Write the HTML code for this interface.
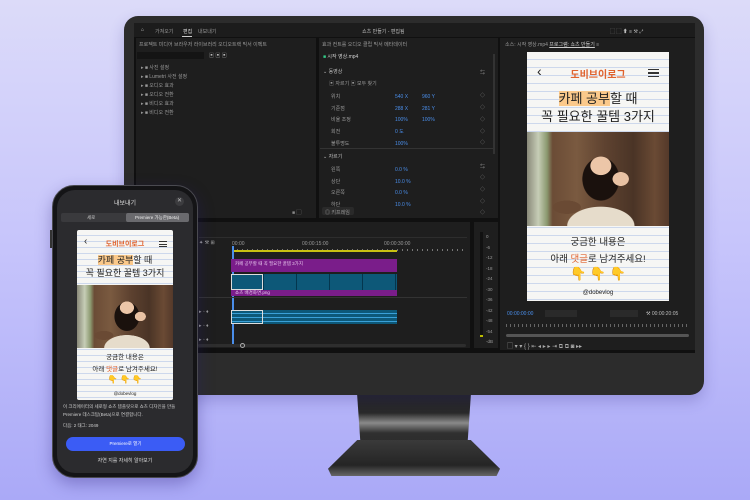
<!DOCTYPE html>
<html><head><meta charset="utf-8"><style>
*{margin:0;padding:0;box-sizing:border-box}
body{width:750px;height:500px;overflow:hidden;position:relative;background:linear-gradient(180deg,#dcdbf9 0%,#c6c4fb 50%,#aaa9f7 100%);font-family:"Liberation Sans","Noto Sans CJK KR",sans-serif;}
.abs{position:absolute}
.t{position:absolute;white-space:nowrap;color:#9a9a9a;font-size:5px}
.paper{background-color:#f6f6f4;background-image:repeating-linear-gradient(180deg,transparent 0,transparent 7px,#cdd8ec 7px,#cdd8ec 8px);}
.photo{background:
 radial-gradient(ellipse 9% 12% at 52% 36%,#ecc6a8 0 80%,transparent 84%),
 radial-gradient(ellipse 7% 9% at 66% 50%,#e8c2a4 0 80%,transparent 84%),
 radial-gradient(ellipse 17% 30% at 52% 50%,#1a110d 0 75%,transparent 78%),
 radial-gradient(ellipse 30% 26% at 52% 100%,#e6dccb 0 78%,transparent 80%),
 radial-gradient(ellipse 14% 10% at 28% 80%,#6a4a34 0 70%,transparent 72%),
 linear-gradient(90deg,#8a8a7a 0,#c6cdb6 8%,#8c9a70 14%,#6b4c36 18%,#7a5a40 35%,#5e4230 55%,#4a3426 75%,#6a4a34 90%,#54392a 100%);}
.scr{font-family:"Liberation Sans","Noto Sans CJK KR",sans-serif;font-weight:bold;color:#222}
</style></head><body>

<!-- monitor -->
<div class="abs" style="left:357px;top:393px;width:114px;height:50px;background:linear-gradient(180deg,#1e1e1e 0,#2a2a2a 40%,#8a8a8a 60%,#303030 80%,#2c2c2c 100%);clip-path:polygon(0 0,100% 0,97% 100%,3% 100%)"></div>
<div class="abs" style="left:328px;top:440px;width:172px;height:36px;background:linear-gradient(180deg,#3a3a3a,#252525 70%,#666 100%);clip-path:polygon(17% 0,83% 0,100% 80%,98% 100%,2% 100%,0 80%);box-shadow:0 4px 6px rgba(0,0,0,.2)"></div>
<div class="abs" style="left:124px;top:16px;width:580px;height:379px;background:#2c2c2c;border-radius:14px;box-shadow:0 6px 14px rgba(60,50,140,.25)"></div>
<div class="abs" style="left:134px;top:23px;width:561px;height:330px;background:#101010"></div>

<!-- top bar -->
<div class="abs" style="left:134px;top:23px;width:561px;height:14px;background:#1c1c1c"></div>
<div class="t" style="left:141px;top:27px;color:#ccc">⌂</div>
<div class="t" style="left:155px;top:28px">가져오기</div>
<div class="t" style="left:183px;top:28px;color:#ddd">편집</div>
<div class="t" style="left:198px;top:28px">내보내기</div>
<div class="abs" style="left:182px;top:36px;width:10px;height:1px;background:#ccc"></div>
<div class="t" style="left:362px;top:28px;color:#bbb">쇼츠 만들기 - 편집됨</div>
<div class="t" style="left:610px;top:28px;color:#bbb">⬚ ⬚ ⬆ ≡ ⚒ ⤢</div>

<!-- project panel -->
<div class="abs" style="left:136px;top:38px;width:180px;height:180px;background:#1e1e1e"></div>
<div class="t" style="left:139px;top:41px">프로젝트  미디어 브라우저  라이브러리  오디오트랙 믹서  이펙트</div>
<div class="abs" style="left:137px;top:52px;width:67px;height:7px;background:#141414"></div>
<div class="t" style="left:209px;top:52px;color:#bbb">▣ ▣ ▣</div>
<div class="t" style="left:141px;top:64px;line-height:9px;color:#999">▸ ■ 사진 설정<br>▸ ■ Lumetri 사전 설정<br>▸ ■ 오디오 효과<br>▸ ■ 오디오 전환<br>▸ ■ 비디오 효과<br>▸ ■ 비디오 전환</div>
<div class="t" style="left:292px;top:209px;color:#888">■ ▢</div>

<!-- effects panel -->
<div class="abs" style="left:319px;top:38px;width:179px;height:180px;background:#1e1e1e"></div>
<div class="t" style="left:322px;top:41px">효과 컨트롤  오디오 클립 믹서  메타데이터</div>
<div class="t" style="left:323px;top:53px;color:#ccc"><span style="color:#3c8">■</span> 시작 영상.mp4</div>
<div class="t" style="left:323px;top:68px;color:#bbb">⌄ 동영상</div>
<div class="t" style="left:329px;top:80px">▣ 자르기  ▣ 모두 찾기</div>
<div class="t" style="left:331px;top:92px;line-height:11.7px">위치<br>기준점<br>비율 조정<br>회전<br>불투명도</div>
<div class="t" style="left:395px;top:92px;line-height:11.7px;color:#4a8eea">540 X<br>288 X<br>100%<br>0 도<br>100%</div>
<div class="t" style="left:422px;top:92px;line-height:11.7px;color:#4a8eea">960 Y<br>281 Y<br>100%</div>
<div class="abs" style="left:320px;top:148px;width:175px;height:1px;background:#333"></div>
<div class="t" style="left:323px;top:153px;color:#bbb">⌄ 자르기</div>
<div class="t" style="left:331px;top:165px;line-height:11.7px">왼쪽<br>상단<br>오른쪽<br>하단</div>
<div class="t" style="left:395px;top:165px;line-height:11.7px;color:#4a8eea">0.0 %<br>10.0 %<br>0.0 %<br>10.0 %</div>
<div class="t" style="left:480px;top:68px;line-height:11.7px;color:#888">⇆<br><br>◇<br>◇<br>◇<br>◇<br>◇<br><br>⇆<br>◇<br>◇<br>◇<br>◇</div>
<div class="abs" style="left:493px;top:54px;width:2px;height:100px;background:#333"></div>
<div class="abs" style="left:322px;top:207px;width:32px;height:8px;background:#2a2a2a;border-radius:2px"></div>
<div class="t" style="left:325px;top:209px">◎ 키프레임</div>

<!-- program monitor -->
<div class="abs" style="left:500px;top:38px;width:195px;height:312px;background:#1e1e1e"></div>
<div class="t" style="left:505px;top:41px">소스: 시작 영상.mp4    <span style="color:#ccc;text-decoration:underline">프로그램: 쇼츠 만들기</span>  ≡</div>

<!-- preview -->
<div class="abs paper scr" style="left:527px;top:52px;width:142px;height:249px;overflow:hidden">
  <div class="abs" style="left:10px;top:11px;font-size:14px;font-weight:normal">‹</div>
  <div class="abs" style="left:0;width:142px;top:14px;text-align:center;color:#e0622e;font-size:10px">도비브이로그</div>
  <div class="abs" style="left:121px;top:17px;width:11px;height:8px;border-top:1.5px solid #333;border-bottom:1.5px solid #333"><div style="margin-top:2px;height:1.5px;background:#333"></div></div>
  <div class="abs" style="left:0;width:142px;top:38px;text-align:center;font-size:13px;line-height:18px;font-weight:normal;color:#222"><span style="background:#fbc98b">카페 공부</span>할 때<br>꼭 필요한 꿀템 3가지</div>
  <div class="abs photo" style="left:0;top:80px;width:142px;height:94px"></div>
  <div class="abs" style="left:0;width:142px;top:182px;text-align:center;font-size:9.5px;line-height:17px;font-weight:normal">궁금한 내용은<br>아래 <span style="color:#e0622e">댓글</span>로 남겨주세요!</div>
  <div class="abs" style="left:0;width:142px;top:214px;text-align:center;font-size:13px;color:#f4a526">👇 👇 👇</div>
  <div class="abs" style="left:0;width:142px;top:238px;text-align:center;font-size:6px;font-weight:normal">@dobevlog</div>
</div>
<div class="t" style="left:507px;top:311px;color:#4a8eea">00:00:00:00</div>
<div class="abs" style="left:545px;top:310px;width:32px;height:7px;background:#2a2a2a"></div>
<div class="abs" style="left:610px;top:310px;width:28px;height:7px;background:#2a2a2a"></div>
<div class="t" style="left:646px;top:311px;color:#bbb">⚒ 00:00:20:05</div>
<div class="abs" style="left:506px;top:324px;width:183px;height:3px;background:repeating-linear-gradient(90deg,#666 0 1px,transparent 1px 4px)"></div>
<div class="abs" style="left:506px;top:334px;width:183px;height:3px;background:#555;border-radius:2px"></div>
<div class="t" style="left:507px;top:341px;color:#aaa;font-size:6px">▢ ▾ ▾ { } ⇤ ◂ ▸ ▸ ⇥ ⧉ ⧉ ◙ ▸▸</div>

<!-- timeline -->
<div class="abs" style="left:196px;top:222px;width:274px;height:126px;background:#1e1e1e"></div>
<div class="abs" style="left:199px;top:237px;width:268px;height:1px;background:#2d2d2d"></div>
<div class="t" style="left:199px;top:240px;color:#aaa">✦ ⚒ ⊞</div>
<div class="t" style="left:232px;top:241px">00:00</div>
<div class="t" style="left:302px;top:241px">00:00:15:00</div>
<div class="t" style="left:384px;top:241px">00:00:30:00</div>
<div class="abs" style="left:232px;top:249px;width:234px;height:2px;background:repeating-linear-gradient(90deg,#777 0 1px,transparent 1px 5px)"></div>
<div class="abs" style="left:232px;top:250px;width:165px;height:2px;background:#c8c012"></div>
<div class="abs" style="left:232px;top:246px;width:2px;height:100px;background:#4a8eea"></div>
<div class="abs" style="left:231px;top:259px;width:166px;height:13px;background:#7a1d8a"></div>
<div class="t" style="left:235px;top:261px;color:#e8c8ee;font-size:4.5px">카페 공부할 때 꼭 필요한 꿀템 3가지</div>
<div class="abs" style="left:231px;top:274px;width:166px;height:16px;background:repeating-linear-gradient(90deg,#0d5878 0 32px,#04364e 32px 33px)"></div>
<div class="abs" style="left:231px;top:274px;width:32px;height:16px;border:1px solid #ddd"></div>
<div class="abs" style="left:231px;top:290px;width:166px;height:6px;background:#7a1d8a"></div>
<div class="t" style="left:235px;top:290px;color:#e8c8ee;font-size:4.5px">쇼츠 배경화면.png</div>
<div class="abs" style="left:199px;top:297px;width:268px;height:1px;background:#333"></div>
<div class="abs" style="left:231px;top:310px;width:166px;height:14px;background:repeating-linear-gradient(180deg,#0d5878 0 3px,#3aa0d8 3px 4px)"></div>
<div class="abs" style="left:231px;top:310px;width:32px;height:14px;border:1px solid #ddd"></div>
<div class="t" style="left:199px;top:305px;line-height:14px">▸ ◦ ♦<br>▸ ◦ ♦<br>▸ ◦ ♦</div>
<div class="abs" style="left:198px;top:344px;width:268px;height:3px;background:#2e2e2e;border-radius:2px"></div>
<div class="abs" style="left:240px;top:343px;width:5px;height:5px;border:1px solid #aaa;border-radius:50%"></div>

<!-- audio meter -->
<div class="abs" style="left:474px;top:222px;width:24px;height:126px;background:#1e1e1e"></div>
<div class="abs" style="left:480px;top:232px;width:3px;height:105px;background:#111;border-bottom:2px solid #bb0"></div>
<div class="t" style="left:486px;top:232px;line-height:10.5px;font-size:4.5px">0<br>-6<br>-12<br>-18<br>-24<br>-30<br>-36<br>-42<br>-48<br>-54<br>-dB</div>

<!-- phone -->
<div class="abs" style="left:52px;top:185px;width:146px;height:293px;background:#141416;border-radius:22px;box-shadow:0 6px 16px rgba(40,30,120,.35);border:1px solid #4a4a50"></div>
<div class="abs" style="left:50px;top:230px;width:2px;height:18px;background:#333"></div>
<div class="abs" style="left:57px;top:190px;width:136px;height:283px;background:#2b2b2e;border-radius:18px"></div>
<div class="t" style="left:57px;width:136px;text-align:center;top:198px;color:#ddd;font-size:6px">내보내기</div>
<div class="abs" style="left:175px;top:197px;width:9px;height:9px;border-radius:50%;background:#3c3c3f;color:#bbb;font-size:6px;text-align:center;line-height:9px">✕</div>
<div class="abs" style="left:61px;top:213px;width:128px;height:9px;background:#3a3a3d;border-radius:2px"></div>
<div class="abs" style="left:126px;top:213px;width:63px;height:9px;background:#6a6a6e;border-radius:2px"></div>
<div class="t" style="left:87px;top:215px;color:#ccc;font-size:4.5px">세로</div>
<div class="t" style="left:135px;top:215px;color:#eee;font-size:4.5px">Premiere 가능한(Beta)</div>
<div class="abs paper scr" style="left:77px;top:230px;width:96px;height:170px;overflow:hidden;border-radius:2px;background-image:repeating-linear-gradient(180deg,transparent 0,transparent 5px,#cdd8ec 5px,#cdd8ec 6px)">
  <div class="abs" style="left:7px;top:6px;font-size:10px;font-weight:normal">‹</div>
  <div class="abs" style="left:0;width:96px;top:9px;text-align:center;color:#e0622e;font-size:7px">도비브이로그</div>
  <div class="abs" style="left:82px;top:11px;width:8px;height:6px;border-top:1px solid #333;border-bottom:1px solid #333"><div style="margin-top:1.5px;height:1px;background:#333"></div></div>
  <div class="abs" style="left:0;width:96px;top:24px;text-align:center;font-size:9px;line-height:13px;font-weight:normal"><span style="background:#fbc98b">카페 공부</span>할 때<br>꼭 필요한 꿀템 3가지</div>
  <div class="abs photo" style="left:0;top:55px;width:96px;height:63px"></div>
  <div class="abs" style="left:0;width:96px;top:122px;text-align:center;font-size:6.5px;line-height:12px;font-weight:normal">궁금한 내용은<br>아래 <span style="color:#e0622e">댓글</span>로 남겨주세요!</div>
  <div class="abs" style="left:0;width:96px;top:145px;text-align:center;font-size:8px">👇 👇 👇</div>
  <div class="abs" style="left:0;width:96px;top:161px;text-align:center;font-size:4.5px;font-weight:normal">@dobevlog</div>
</div>
<div class="t" style="left:63px;top:403px;color:#ccc;font-size:4.5px;line-height:8px">이 크리에이터의 세로형 쇼츠 템플릿으로 쇼츠 디자인을 만들<br>Premiere 데스크탑(Beta)으로 연결합니다.</div>
<div class="t" style="left:63px;top:423px;color:#ccc;font-size:4.5px">다음: 2   태그: 2049</div>
<div class="abs" style="left:66px;top:437px;width:119px;height:14px;background:#3b5cf5;border-radius:7px;color:#fff;font-size:4.5px;text-align:center;line-height:14px">Premiere로 열기</div>
<div class="t" style="left:57px;width:136px;text-align:center;top:457px;color:#ddd;font-size:5px">자연 지를 자세히 알아보기</div>
</body></html>
